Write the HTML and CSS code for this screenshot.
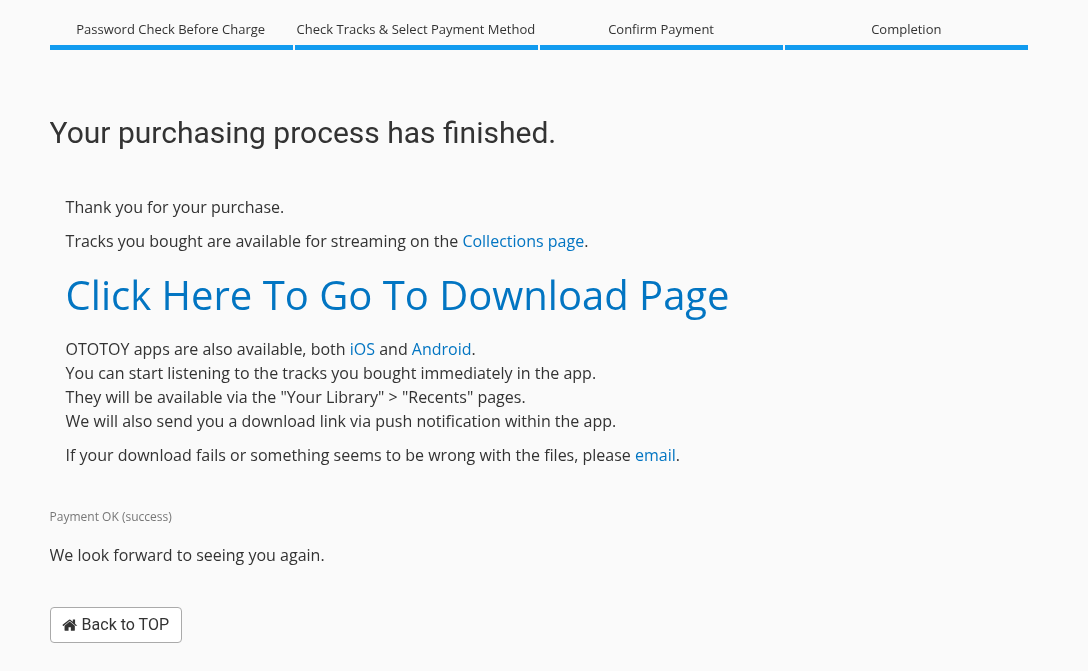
FILE: index.html
```html
<!DOCTYPE html>
<html lang="en">
<head>
<meta charset="utf-8">
<title>Your purchasing process has finished.</title>
<link rel="stylesheet" href="styles.css">
</head>
<body>
<main class="page">
  <ol class="steps">
    <li class="step">Password Check Before Charge</li>
    <li class="step">Check Tracks &amp; Select Payment Method</li>
    <li class="step">Confirm Payment</li>
    <li class="step">Completion</li>
  </ol>
  <h1 class="title">Your purchasing process has finished.</h1>
  <section class="message">
    <p class="para">Thank you for your purchase.</p>
    <p class="para">Tracks you bought are available for streaming on the <a href="#">Collections page</a>.</p>
    <p class="download"><a href="#">Click Here To Go To Download Page</a></p>
    <p class="para">OTOTOY apps are also available, both <a href="#">iOS</a> and <a href="#">Android</a>.<br>
    You can start listening to the tracks you bought immediately in the app.<br>
    They will be available via the "Your Library" &gt; "Recents" pages.<br>
    We will also send you a download link via push notification within the app.</p>
    <p class="para">If your download fails or something seems to be wrong with the files, please <a href="#">email</a>.</p>
  </section>
  <p class="status">Payment OK (success)</p>
  <p class="thanks">We look forward to seeing you again.</p>
  <a class="button" href="#"><svg class="icon" viewBox="0 0 1664 1792" aria-hidden="true"><path fill="currentColor" d="M1408 992v480q0 26-19 45t-45 19H960v-384H704v384H320q-26 0-45-19t-19-45V992q0-1 .5-3t.5-3l575-474 575 474q1 2 1 6zm223-69l-62 74q-8 9-21 11h-3q-13 0-21-7L832 424 140 1001q-12 8-24 7-13-2-21-11l-62-74q-8-10-7-23.500t11-21.500L756 304q32-26 76-26t76 26l272 228V314q0-14 9-23t23-9h192q14 0 23 9t9 23v454l219 182q10 8 11 21.500t-7 23.500z"/></svg> Back to TOP</a>
</main>
</body>
</html>
```
FILE: styles.css
```css
* { box-sizing: border-box; }
html, body { margin: 0; padding: 0; }
body {
  background: #fafafa;
  color: #333;
  font-family: "Open Sans", "Liberation Sans", sans-serif;
  font-size: 16px;
  line-height: 24px;
}
a { color: #0275c2; text-decoration: none; }
.page { width: 978.8px; margin-left: 49.6px; height: 671px; overflow: hidden; opacity: 0.999; will-change: opacity; }
.steps {
  list-style: none;
  margin: 0;
  padding: 19px 0 0;
  display: grid;
  grid-template-columns: repeat(4, 1fr);
  gap: 2px;
}
.step {
  font-size: 13px;
  line-height: 20px;
  text-align: center;
  white-space: nowrap;
  padding: 0 1px 5px 0;
  border-bottom: 5px solid #129bef;
  height: 31px;
}
.title {
  margin: 65px 0 0;
  font-family: Roboto, sans-serif;
  font-weight: 400;
  font-size: 30px;
  line-height: 36px;
}
.message { padding: 0 16px; margin-top: 44px; }
.para { margin: 0 0 10px; }
.download { margin: 12px 0 12px; font-size: 40px; line-height: 60px; }
.status { margin: 41px 0 0; font-size: 12px; line-height: 18px; color: #777; }
.thanks { margin: 17px 0 0; }
.button {
  display: inline-flex;
  align-items: center;
  gap: 4px;
  margin-top: 40px;
  height: 36px;
  padding: 0 12px 0 11.6px;
  border: 1px solid #aaa;
  border-radius: 4px;
  background: #fff;
  color: #333;
  font-family: Roboto, sans-serif;
  font-size: 16px;
}
.icon { width: 15.4px; height: 16px; }
```
